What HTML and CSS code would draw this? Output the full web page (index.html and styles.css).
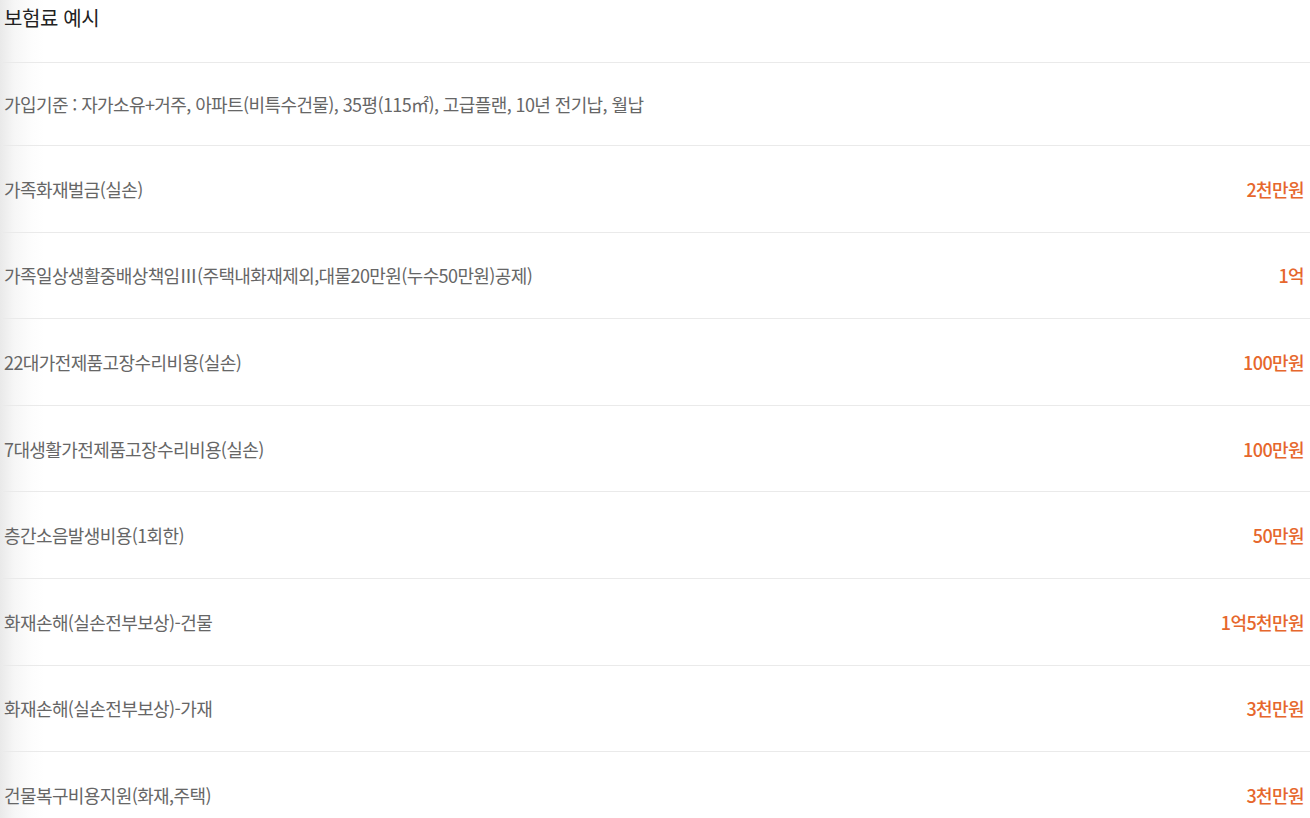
FILE: index.html
```html
<!DOCTYPE html>
<html lang="ko">
<head>
<meta charset="utf-8">
<link rel="stylesheet" href="styles.css">
</head>
<body>
<div class="page">
  <h2 class="title">보험료 예시</h2>
  <ul class="list">
    <li class="row basis"><span class="label">가입기준 : 자가소유+거주, 아파트(비특수건물), 35평(115㎡), 고급플랜, 10년 전기납, 월납</span></li>
    <li class="row"><span class="label">가족화재벌금(실손)</span><span class="value">2천만원</span></li>
    <li class="row"><span class="label">가족일상생활중배상책임Ⅲ(주택내화재제외,대물20만원(누수50만원)공제)</span><span class="value">1억</span></li>
    <li class="row"><span class="label">22대가전제품고장수리비용(실손)</span><span class="value">100만원</span></li>
    <li class="row"><span class="label">7대생활가전제품고장수리비용(실손)</span><span class="value">100만원</span></li>
    <li class="row"><span class="label">층간소음발생비용(1회한)</span><span class="value">50만원</span></li>
    <li class="row"><span class="label">화재손해(실손전부보상)-건물</span><span class="value">1억5천만원</span></li>
    <li class="row"><span class="label">화재손해(실손전부보상)-가재</span><span class="value">3천만원</span></li>
    <li class="row"><span class="label">건물복구비용지원(화재,주택)</span><span class="value">3천만원</span></li>
  </ul>
</div>
</body>
</html>
```

FILE: styles.css
```css
html, body {
  margin: 0;
  padding: 0;
  background: #fff;
}
body {
  font-family: "Noto Sans CJK KR", "Noto Sans", sans-serif;
  background: linear-gradient(to right, #e9e9e9 0px, #f6f6f6 14px, #fdfdfd 32px, #ffffff 44px);
  min-height: 818px;
}
.page {
  padding: 0 0 0 3px;
}
.title {
  margin: 0;
  height: 62px;
  padding: 0 0 0 1px;
  font-size: 20px;
  font-weight: 400;
  line-height: 36px;
  color: #222;
  letter-spacing: -0.4px;
  box-sizing: border-box;
}
.list {
  list-style: none;
  margin: 0;
  padding: 0;
}
.row {
  display: flex;
  justify-content: space-between;
  align-items: center;
  border-top: 1px solid #eaeaea;
  height: 85.6px;
  padding: 0 6px 0 1px;
  font-size: 18px;
  letter-spacing: -0.6px;
}
.row.basis {
  height: 82px;
}
.label {
  color: #666;
}
.value {
  color: #e6672d;
  font-weight: 500;
}
```
